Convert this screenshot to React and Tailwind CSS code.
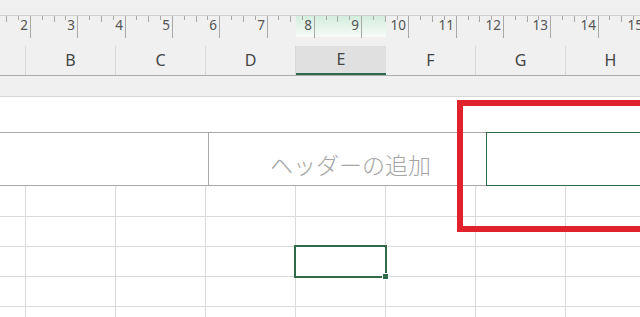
import React from 'react'

const cols = ['', 'B', 'C', 'D', 'E', 'F', 'G', 'H']
const colW = (i) => (i === 0 ? 'w-[26px]' : 'w-[90px]')

const Ruler = () => {
  const step = 47.3
  const ticks = []
  for (let n = 1; n <= 15; n++) {
    const x = 30 + (n - 2) * step
    ticks.push({ x, len: 23, label: n })
    ticks.push({ x: x + step / 4, len: 4 })
    ticks.push({ x: x + step / 2, len: 6 })
    ticks.push({ x: x + (3 * step) / 4, len: 4 })
  }
  return (
    <svg width="640" height="23" className="block">
      <defs>
        <linearGradient id="sel" x1="0" y1="0" x2="0" y2="1">
          <stop offset="0" stopColor="#d4eddd" />
          <stop offset="1" stopColor="#f6fbf8" />
        </linearGradient>
      </defs>
      <rect x="296" y="1" width="90" height="21" fill="url(#sel)" />
      <line x1="0" y1="0.5" x2="640" y2="0.5" stroke="#cfcfcf" />
      {ticks.map((t, i) => (
        <line
          key={i}
          x1={Math.round(t.x) + 0.5}
          y1="1"
          x2={Math.round(t.x) + 0.5}
          y2={1 + t.len}
          stroke="#a8a8a8"
        />
      ))}
      {ticks
        .filter((t) => t.label && t.label > 1)
        .map((t) => (
          <text
            key={t.label}
            x={Math.round(t.x) - 2}
            y="14.5"
            textAnchor="end"
            fontSize="13.5"
            fill="#555"
            fontFamily="'Noto Sans', sans-serif"
          >
            {t.label}
          </text>
        ))}
    </svg>
  )
}

export default function App() {
  return (
    <div className="relative h-[317px] w-[640px] overflow-hidden bg-[#f0f0f0] font-['Noto_Sans',sans-serif]">
      <div className="h-[15px]" />
      <Ruler />
      <div className="h-[8px]" />

      {/* column headers */}
      <div className="flex h-[30px] border-b border-[#ababab]">
        {cols.map((c, i) => (
          <div
            key={i}
            className={`${colW(i)} flex shrink-0 items-center justify-center pb-[2px] text-[16px] text-[#444] ${
              c === 'E'
                ? 'bg-[#e0e0e0] border-b-[2px] border-[#2e6a4a]'
                : 'border-r border-[#d9d9d9]'
            }`}
          >
            {c}
          </div>
        ))}
      </div>
      <div className="h-[21px] border-b border-[#d6d6d6]" />

      {/* page */}
      <div className="relative h-[300px] bg-white">
        <div className="h-[35px]" />

        <div className="flex h-[54px]">
          <div className="flex w-[486px] shrink-0 border-y border-[#a8a8a8]">
            <div className="w-[209px] shrink-0 border-r border-[#a8a8a8]" />
            <div className="flex flex-1 items-center justify-center pl-[6px] pt-[10px] font-['Noto_Sans_CJK_JP',sans-serif] text-[23px] font-light text-[#a6a6a6]">
              ヘッダーの追加
            </div>
          </div>
          <div className="w-[200px] shrink-0 border border-[#2e6a4a]" />
        </div>

        {[31, 30, 30, 30, 30].map((h, r) => (
          <div key={r} className="flex" style={{ height: h }}>
            {cols.map((c, i) => (
              <div key={i} className={`${colW(i)} shrink-0 border-r border-b border-[#dadada]`} />
            ))}
          </div>
        ))}

        {/* selected cell */}
        <div className="absolute left-[294px] top-[148px] h-[33px] w-[93px] border-2 border-[#2f6a4b]" />
        <div className="absolute left-[382px] top-[176px] h-[7px] w-[7px] border border-white bg-[#2f6a4b]" />

        {/* red annotation */}
        <div className="absolute left-[457px] top-[3px] h-[132px] w-[220px] border-[6px] border-[#e0222d]" />
      </div>
    </div>
  )
}
